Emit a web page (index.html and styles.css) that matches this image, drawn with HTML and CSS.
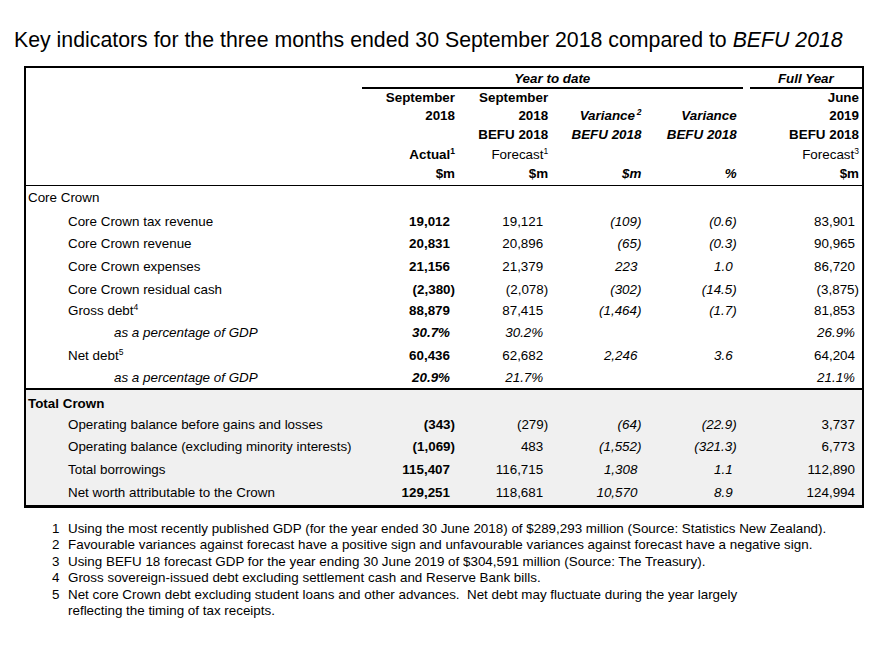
FILE: index.html
```html
<!DOCTYPE html>
<html>
<head>
<meta charset="utf-8">
<title>Key indicators</title>
<link rel="stylesheet" href="styles.css">
</head>
<body>
<h1 class="title">Key indicators for the three months ended 30 September 2018 compared to <em>BEFU 2018</em></h1>
<table class="ki">
  <colgroup>
    <col class="c-label"><col class="c-num"><col class="c-num"><col class="c-num"><col class="c-pct"><col class="c-full">
  </colgroup>
  <thead>
    <tr class="h1r">
      <th></th>
      <th colspan="4" class="grp"><div class="grp-line bi">Year to date</div></th>
      <th class="grp grp-full"><div class="grp-line full bi">Full Year</div></th>
    </tr>
    <tr class="h2r"><th></th><th>September</th><th>September</th><th></th><th></th><th>June</th></tr>
    <tr class="h3r"><th></th><th>2018</th><th>2018</th><th class="bi">Variance<sup>&#8201;2</sup></th><th class="bi">Variance</th><th>2019</th></tr>
    <tr class="h4r"><th></th><th></th><th>BEFU 2018</th><th class="bi">BEFU 2018</th><th class="bi">BEFU 2018</th><th>BEFU 2018</th></tr>
    <tr class="h5r"><th></th><th>Actual<sup>1</sup></th><th class="reg">Forecast<sup>1</sup></th><th></th><th></th><th class="reg">Forecast<sup>3</sup></th></tr>
    <tr class="h6r"><th></th><th>$m</th><th>$m</th><th class="bi">$m</th><th class="bi">%</th><th>$m</th></tr>
  </thead>
  <tbody class="core">
    <tr class="sec-row"><td class="sec">Core Crown</td><td></td><td></td><td></td><td></td><td></td></tr>
    <tr class="r22"><td class="l1">Core Crown tax revenue</td><td class="b p">19,012</td><td class="p">19,121</td><td class="i">(109)</td><td class="i">(0.6)</td><td class="p">83,901</td></tr>
    <tr class="r23"><td class="l1">Core Crown revenue</td><td class="b p">20,831</td><td class="p">20,896</td><td class="i">(65)</td><td class="i">(0.3)</td><td class="p">90,965</td></tr>
    <tr class="r23"><td class="l1">Core Crown expenses</td><td class="b p">21,156</td><td class="p">21,379</td><td class="i pi">223</td><td class="i pi">1.0</td><td class="p">86,720</td></tr>
    <tr class="r22"><td class="l1">Core Crown residual cash</td><td class="b">(2,380)</td><td>(2,078)</td><td class="i">(302)</td><td class="i">(14.5)</td><td>(3,875)</td></tr>
    <tr class="r21"><td class="l1">Gross debt<sup>4</sup></td><td class="b p">88,879</td><td class="p">87,415</td><td class="i">(1,464)</td><td class="i">(1.7)</td><td class="p">81,853</td></tr>
    <tr class="r22"><td class="l2">as a percentage of GDP</td><td class="b i p">30.7%</td><td class="i p">30.2%</td><td></td><td></td><td class="i p">26.9%</td></tr>
    <tr class="r24"><td class="l1">Net debt<sup>5</sup></td><td class="b p">60,436</td><td class="p">62,682</td><td class="i pi">2,246</td><td class="i pi">3.6</td><td class="p">64,204</td></tr>
    <tr class="r22"><td class="l2">as a percentage of GDP</td><td class="b i p">20.9%</td><td class="i p">21.7%</td><td></td><td></td><td class="i p">21.1%</td></tr>
  </tbody>
  <tbody class="total">
    <tr class="sec-row sec-total"><td class="sec b">Total Crown</td><td></td><td></td><td></td><td></td><td></td></tr>
    <tr class="r22"><td class="l1">Operating balance before gains and losses</td><td class="b">(343)</td><td>(279)</td><td class="i">(64)</td><td class="i">(22.9)</td><td class="p">3,737</td></tr>
    <tr class="r23"><td class="l1">Operating balance (excluding minority interests)</td><td class="b">(1,069)</td><td class="p">483</td><td class="i">(1,552)</td><td class="i">(321.3)</td><td class="p">6,773</td></tr>
    <tr class="r22"><td class="l1">Total borrowings</td><td class="b p">115,407</td><td class="p">116,715</td><td class="i pi">1,308</td><td class="i pi">1.1</td><td class="p">112,890</td></tr>
    <tr class="r25"><td class="l1">Net worth attributable to the Crown</td><td class="b p">129,251</td><td class="p">118,681</td><td class="i pi">10,570</td><td class="i pi">8.9</td><td class="p">124,994</td></tr>
  </tbody>
</table>
<ol class="notes">
  <li><span class="n">1</span><span class="t">Using the most recently published GDP (for the year ended 30 June 2018) of $289,293 million (Source: Statistics New Zealand).</span></li>
  <li><span class="n">2</span><span class="t">Favourable variances against forecast have a positive sign and unfavourable variances against forecast have a negative sign.</span></li>
  <li><span class="n">3</span><span class="t">Using BEFU 18 forecast GDP for the year ending 30 June 2019 of $304,591 million (Source: The Treasury).</span></li>
  <li><span class="n">4</span><span class="t">Gross sovereign-issued debt excluding settlement cash and Reserve Bank bills.</span></li>
  <li><span class="n">5</span><span class="t">Net core Crown debt excluding student loans and other advances.&nbsp; Net debt may fluctuate during the year largely<br>reflecting the timing of tax receipts.</span></li>
</ol>
</body>
</html>
```

FILE: styles.css
```css
html, body {
  margin: 0;
  padding: 0;
  background: #fff;
}

body {
  font-family: "Liberation Sans", Arial, sans-serif;
  color: #000;
}

.title {
  margin: 0;
  padding: 28px 0 0 14px;
  font-size: 21.3px;
  font-weight: normal;
  line-height: 24px;
}

.title em {
  font-style: italic;
}

.ki {
  margin: 14px 0 0 24px;
  border-collapse: collapse;
  table-layout: fixed;
  width: 840px;
  font-size: 13.4px;
  border-top: 2px solid #000;
  border-left: 2px solid #000;
  border-right: 2px solid #000;
  border-bottom: 3px solid #000;
}

.c-label { width: 336px; }
.c-num { width: 93px; }
.c-pct { width: 101px; }
.c-full { width: 120px; }

.ki th,
.ki td {
  padding: 0;
  text-align: right;
  white-space: nowrap;
  line-height: 15px;
  vertical-align: middle;
}

.ki th {
  font-weight: bold;
}

.ki th:nth-child(5),
.ki td:nth-child(5) {
  padding-right: 6px;
}

.ki th:nth-child(6),
.ki td:nth-child(6) {
  padding-right: 3px;
}

.ki th.grp {
  padding-right: 0;
  text-align: center;
  vertical-align: bottom;
}

.grp-line {
  border-bottom: 2px solid #000;
  line-height: 15px;
  padding-top: 3px;
  padding-bottom: 1px;
}

.grp-line.full {
  margin-left: 7px;
}

.ki thead {
  border-bottom: 1px solid #000;
}

.h1r { height: 21px; }
.h2r { height: 17px; }
.h3r { height: 19px; }
.h4r { height: 19px; }
.h5r { height: 20px; }
.h6r { height: 21px; }

.h6r th { vertical-align: top; padding-top: 2px; }

.ki th.reg { font-weight: normal; }
.ki .bi { font-style: italic; font-weight: bold; }

.ki sup {
  font-size: 8.5px;
  line-height: 0;
  vertical-align: 5px;
}

.core {
  border-bottom: 2px solid #000;
}

.total {
  background: #f0f0f0;
}

.sec-row { height: 25px; }
.sec-total { height: 24px; }
.sec-total td { padding-top: 4px; }
.r21 { height: 21px; }
.r22 { height: 22px; }
.r23 { height: 23px; }
.r24 { height: 24px; }
.r25 { height: 26px; }

.ki td.sec {
  text-align: left;
  padding-left: 2px;
}

.ki td.l1 {
  text-align: left;
  padding-left: 42px;
}

.ki td.l2 {
  text-align: left;
  padding-left: 88px;
  font-style: italic;
}

.ki .b { font-weight: bold; }
.ki .i { font-style: italic; }

.ki td.p { padding-right: 5px; }
.ki td.pi { padding-right: 4px; }
.ki td:nth-child(5).pi { padding-right: 10px; }
.ki td:nth-child(6).p { padding-right: 7px; }

.notes {
  list-style: none;
  margin: 13px 0 0 0;
  padding: 0;
  font-size: 13.4px;
  line-height: 16.6px;
}

.notes li {
  display: flex;
}

.notes .n {
  width: 16px;
  padding-left: 52px;
  box-sizing: content-box;
}
```
